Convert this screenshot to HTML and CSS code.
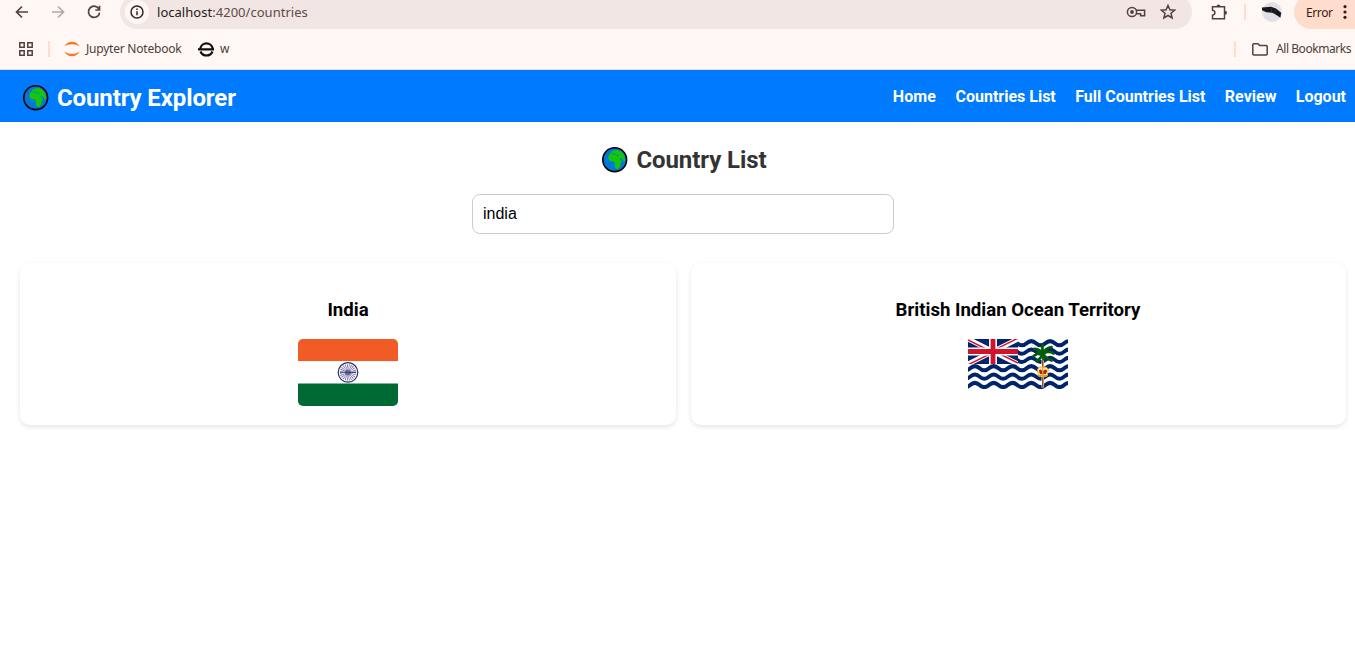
FILE: index.html
```html
<!DOCTYPE html>
<html lang="en">
<head>
<meta charset="utf-8">
<title>Country Explorer</title>
<link rel="stylesheet" href="styles.css">
</head>
<body>
<svg width="0" height="0" class="defs" aria-hidden="true">
  <symbol id="globe" viewBox="0 0 26 26">
    <circle cx="12.700" cy="12.700" r="11.900" fill="#0078d7" stroke="#000" stroke-width="1.600"/>
    <path d="M6.300 9.800l1.200-2.800 1.500-.5 0-1.600 2.800-1.500 4-.3 3.200 1.500 2.300 2.400 1.500 3.600.2 2.500-.6 1.700-1.400-1.100-1-2.200-1.300.3-1.300-1 1.200 2.500 1.500.6-1.700 2.900.1 2.300-2 2.400-1.800.8-1.200-1.200-.9-3.600.1-1.900-1.600-1.400-2.800 0-1.700-1.800z" fill="#16c60c"/>
    <path d="M10.500 7.600l2-.5 2 1 2.500 0M10 5.400l1.500.6" fill="none" stroke="#0078d7" stroke-width=".7"/>
  </symbol>
</svg>

<div class="browser">
  <div class="toolbar">
    <svg class="tool back" viewBox="0 0 16 16"><path d="M14 8H3M8 2.500L2.500 8 8 13.500"/></svg>
    <svg class="tool forward" viewBox="0 0 16 16"><path d="M2 8h11M8 2.500L13.500 8 8 13.500"/></svg>
    <svg class="tool reload" viewBox="0 0 16 16"><path d="M12.800 4.800A5.600 5.600 0 1 0 13.600 8.600M13.500 1.800v4.200H9.300"/></svg>
    <div class="address">
      <span class="info"><svg viewBox="0 0 14 14"><circle cx="7" cy="7" r="6"/><path d="M7 6.200v4M7 3.500v1.500"/></svg></span>
      <span class="url">localhost<span class="path">:4200/countries</span></span>
      <svg class="key" viewBox="0 0 20 14"><circle cx="6" cy="7" r="4.600"/><circle cx="6" cy="7" r="1.900" class="solid"/><path d="M10 5.200h8.600v5.500h-4V8.800H10"/></svg>
      <svg class="star" viewBox="0 0 16 16"><path d="M8 1.500l1.900 4.300 4.700.4L11 9.300l1.100 4.700L8 11.500 3.900 14 5 9.300 1.400 6.200l4.700-.4z"/></svg>
    </div>
    <svg class="puzzle" viewBox="0 0 18 18"><path d="M2.500 3.800h12v11.900h-12v-3.500c3.200-.6 3.200-4.400 0-5z"/><path class="solid" d="M6.500 3.400a2 2 0 0 1 4 0zM15 7.700a2 2 0 0 1 0 4z"/></svg>
    <i class="divider"></i>
    <svg class="avatar" viewBox="0 0 20 20"><circle cx="10" cy="10" r="10" fill="#e3dfe8"/><path d="M0 5.500L9 4.800l5 1.700 5.200 4.200-.8 5-4-2.700-4-2.200-6-.6L0 8.300z" fill="#171719"/><path d="M10 5.400l-.8 5M14 7.500l-2 4" stroke="#444" stroke-width=".5"/></svg>
    <div class="error">Error<svg viewBox="0 0 4 16"><circle cx="2" cy="2.600" r="1.600"/><circle cx="2" cy="8" r="1.600"/><circle cx="2" cy="13.300" r="1.600"/></svg></div>
  </div>
  <div class="bookmarks">
    <svg class="apps" viewBox="0 0 14 14"><path d="M.8.800h4.400v4.400H.8zM8.800.800h4.400v4.400H8.800zM.8 8.800h4.400v4.400H.8zM8.800 8.800h4.400v4.400H8.800z"/></svg>
    <i class="divider left"></i>
    <svg class="jupyter" viewBox="0 0 16 16"><path d="M.4 5.500C3-.9 13-.9 15.600 5.500 12 2.400 4 2.400.4 5.500zM.4 10.500c2.600 6.400 12.600 6.400 15.200 0-3.600 3.100-11.600 3.100-15.200 0z"/></svg>
    <span class="jname">Jupyter Notebook</span>
    <svg class="ering" viewBox="0 0 17 16"><path d="M2.300 7.500a6.300 6.300 0 0 1 12.400 0M2.500 10.500a6.500 6.500 0 0 0 12 0M0 8.300h16"/></svg>
    <span class="wname">w</span>
    <i class="divider right"></i>
    <svg class="folder" viewBox="0 0 16 13"><path d="M.8 11V1.800q0-1 1-1H6l1.600 1.700h6.600q1 0 1 1V11q0 1-1 1H1.800q-1 0-1-1z"/></svg>
    <span class="all">All Bookmarks</span>
  </div>
</div>

<nav class="navbar">
  <div class="brand"><svg class="globe"><use href="#globe"/></svg><span class="brand-name">Country Explorer</span></div>
  <div class="links">
    <a class="home">Home</a><a>Countries List</a><a>Full Countries List</a><a>Review</a><a>Logout</a>
  </div>
</nav>

<main>
  <h2><svg class="globe"><use href="#globe"/></svg><span class="title">Country List</span></h2>
  <input class="search" type="text" value="india">
  <div class="cards">
    <article class="card">
      <h3>India</h3>
      <svg class="flag india" viewBox="0 0 100 67">
        <path fill="#f15b25" d="M0 0h100v22.300H0z"/><path fill="#fff" d="M0 22.300h100v22.300H0z"/><path fill="#006a35" d="M0 44.600h100V67H0z"/>
        <circle cx="50" cy="33.400" r="9.800" fill="#fff" stroke="#2e2c70" stroke-width="1.200"/>
        <circle cx="50" cy="33.400" r="4.500" fill="none" stroke="#2e2c70" stroke-width="7.500" stroke-dasharray=".5 .678" opacity=".75"/>
        <circle cx="50" cy="33.400" r="3" fill="#2e2c70" opacity=".6"/><path d="M42 33.400h16" stroke="#2e2c70" stroke-width=".8"/>
      </svg>
    </article>
    <article class="card">
      <h3>British Indian Ocean Territory</h3>
      <svg class="flag" viewBox="0 0 100 50">
        <defs>
          <clipPath id="jack"><path d="M0 0h50v25H0z"/></clipPath>
        </defs>
        <path fill="#fff" d="M0 0h100v50H0z"/>
        <g fill="none" stroke="#00246b" stroke-width="3.900">
          <path id="sea" d="M-16.600 4.200Q-11.900 0-7.200 4.200T2.200 4.200 11.600 4.200 21 4.200 30.400 4.200 39.800 4.200 49.200 4.200 58.600 4.200 68 4.200 77.400 4.200 86.800 4.200 96.200 4.200 105.600 4.200"/>
          <use href="#sea" y="8.400"/><use href="#sea" y="16.700"/><use href="#sea" y="25"/><use href="#sea" y="33.400"/><use href="#sea" y="41.800"/>
        </g>
        <g clip-path="url(#jack)">
          <path fill="#00246b" d="M0 0h50v25H0z"/>
          <path d="M0 0l50 25M50 0L0 25" stroke="#fff" stroke-width="5"/>
          <path d="M0 1l25 12.500M25 11.500L50 24M50-.8L25 11.700M25 13.300L0 25.800" stroke="#cf142b" stroke-width="1.500"/>
          <path d="M25 0v25M0 12.500h50" stroke="#fff" stroke-width="8"/>
          <path d="M25 0v25M0 12.500h50" stroke="#cf142b" stroke-width="4.800"/>
        </g>
        <path d="M74.800 15v33.500" stroke="#fff" stroke-width="2.500"/><path d="M74.800 15v33.500" stroke="#994315" stroke-width="1.500"/>
        <g fill="none" stroke="#006000" stroke-width="2.700" stroke-linecap="round">
          <path d="M75 14Q71 10 66.500 9.800M75 14Q74 9 74.700 6.300M75 14Q78 8.500 83.500 8M75 14Q70 13.500 65.500 17M75 14Q73 20 68.500 22M75 14Q81 11.500 85.500 14.500M75 14Q77 19 83.500 21.500M75 14Q74.500 17 76 20"/>
        </g>
        <path d="M69.500 30.500q2-4 5.300-1.800 3.500-2.200 5.500 1.800l-1 6.500q-4.500 1.800-8.800 0z" fill="#fff0a0" stroke="#d9a51d" stroke-width=".9"/>
        <path d="M70.800 31.500l1.200 3.500h6l1.200-3.500-1.700-1-2.700 1.500-2.500-1.500z" fill="#c51918"/><path d="M74.800 27v9M71 36.500h8" stroke="#d9a51d" stroke-width="1.300"/>
      </svg>
    </article>
  </div>
</main>
</body>
</html>
```
FILE: styles.css
```css
* { box-sizing: border-box; }
body { margin: 0; height: 667px; overflow: hidden; background: #fff; font-family: Roboto, sans-serif; }
svg { display: block; flex: none; }
.defs { position: absolute; }

.browser { height: 70px; background: #fff7f4; border-bottom: 1px solid #eedbd5; font-family: "Noto Sans", "Open Sans", sans-serif; color: #4d3d38; overflow: hidden; }
.browser svg { fill: none; stroke: #534039; stroke-width: 1.5; }
.browser .solid { fill: #534039; stroke: none; }
.toolbar { height: 29px; display: flex; align-items: center; padding: 0 0 5px 14px; }
.tool { width: 16px; height: 16px; }
.browser .tool { stroke-width: 1.7; }
.browser .forward { margin-left: 20px; stroke: #b3a8a5; }
.reload { margin-left: 20px; }
.address { margin-left: 18px; width: 1072px; height: 34px; background: #f1e6e4; border-radius: 17px; display: flex; align-items: center; padding: 0 16px 0 5px; flex: none; }
.info { width: 24px; height: 24px; border-radius: 50%; background: #fff7f4; display: grid; place-items: center; margin-right: 8px; }
.info svg { width: 14px; height: 14px; stroke: #302522; }
.url { font-size: 13px; letter-spacing: .03px; color: #251b18; flex: 1; white-space: nowrap; }
.path { color: #5d4b46; }
.key { width: 20px; height: 14px; margin-right: 14px; }
.star { width: 16px; height: 16px; }
.puzzle { width: 18px; height: 18px; margin: 0 16px 0 18px; }
.divider { width: 2px; height: 16px; background: #ffdccb; flex: none; }
.avatar { width: 20px; height: 20px; margin: 0 12px 0 16px; }
.browser .avatar { stroke: none; }
.error { flex: none; width: 76px; height: 34px; border-radius: 17px; background: #ffdccb; color: #3a1d10; display: flex; align-items: center; padding-left: 12px; font-size: 12px; letter-spacing: -.4px; }
.error svg { width: 4px; height: 16px; margin-left: 10px; }
.browser .error svg { fill: #3a1d10; stroke: none; }
.bookmarks { height: 40px; display: flex; align-items: center; padding: 0 4px 0 19px; font-size: 12px; white-space: nowrap; }
.bookmarks span { margin-top: -1px; }
.apps { width: 14px; height: 14px; }
.divider.left { margin: 0 14px 0 15px; }
.jupyter { width: 16px; height: 16px; }
.browser .jupyter { fill: #f37726; stroke: none; }
.jname { margin: 0 16px 0 6px; width: 96px; letter-spacing: -.22px; }
.ering { width: 17px; height: 16px; }
.browser .ering { stroke: #111; stroke-width: 2.2; }
.wname { margin-left: 5px; }
.divider.right { margin-left: auto; margin-right: 16px; }
.folder { width: 16px; height: 13px; margin-right: 8px; }
.all { width: 75px; letter-spacing: -.44px; }

.navbar { height: 52px; background: #007bff; color: #fff; display: flex; justify-content: space-between; align-items: center; padding: 0 9px 0 23px; font-weight: 700; white-space: nowrap; }
.brand { display: flex; align-items: center; font-size: 24px; letter-spacing: -.12px; padding-top: 3px; }
.globe { width: 26px; height: 26px; }
.brand-name { margin-left: 8px; }
.links { display: flex; gap: 19.4px; font-size: 16px; }
.home { letter-spacing: .1px; }

main { padding: 24px 9px 0 20px; }
h2 { margin: 0; height: 28px; display: flex; align-items: center; justify-content: center; font-size: 24px; letter-spacing: -.08px; color: #333; padding-left: 3px; }
.title { margin-left: 8px; }
.search { display: block; width: 422px; height: 40px; margin: 20px auto 29px; padding: 0 10px; border: 1px solid #ccc; border-radius: 8px; font: 16px "Liberation Sans", Arial, sans-serif; color: #000; background: #fff; outline: none; }
.cards { display: grid; grid-template-columns: 656px 655px; gap: 15px; }
.card { height: 162px; border-radius: 10px; box-shadow: 0 2px 5px rgba(0, 0, 0, .1); display: flex; flex-direction: column; align-items: center; padding-top: 37px; background: #fff; }
.card + .card { padding-right: 1px; }
h3 { margin: 0 0 18px; font-size: 18.6px; line-height: 21px; color: #000; white-space: nowrap; }
.flag { width: 100px; overflow: hidden; }
.india { border-radius: 5px; }
```
